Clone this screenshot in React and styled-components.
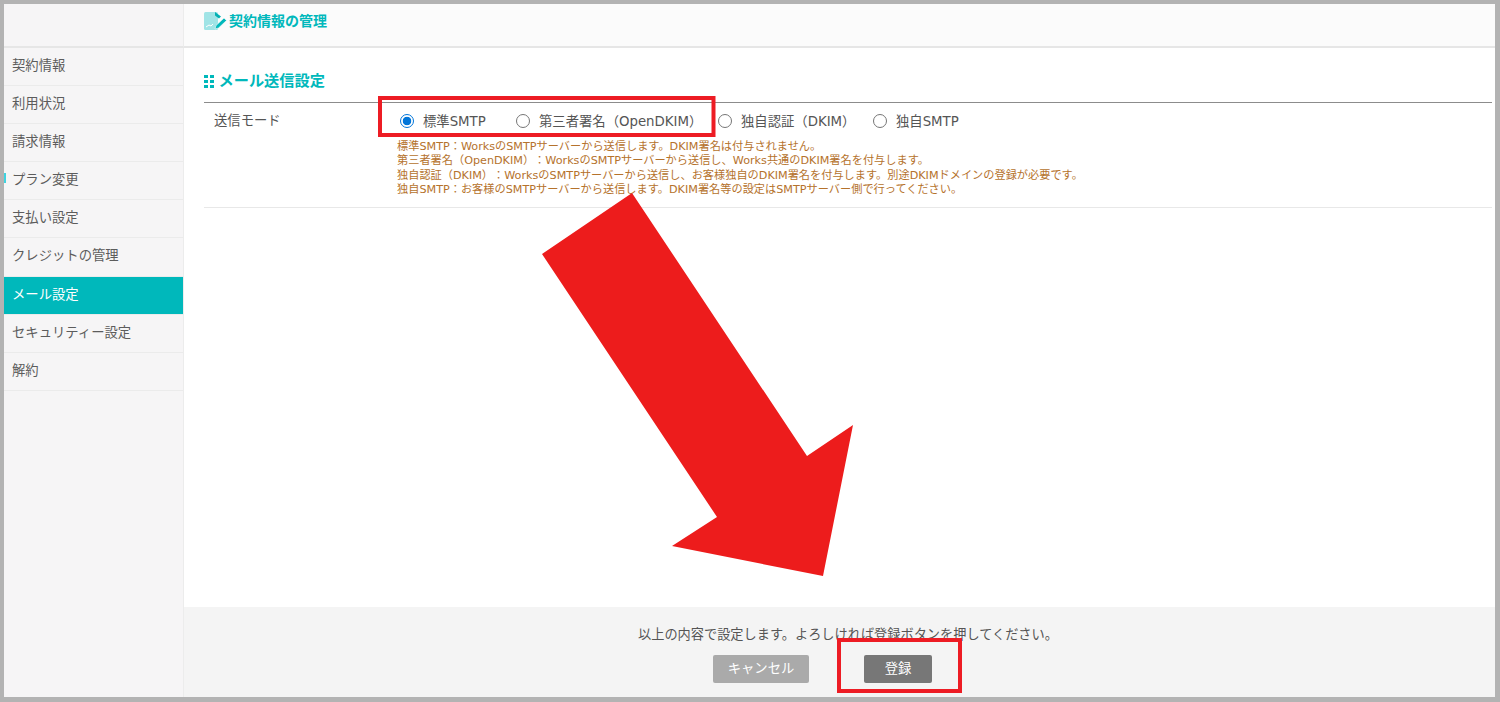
import React from 'react';
import styled, { createGlobalStyle } from 'styled-components';

const GlobalStyle = createGlobalStyle`
    html, body {
        margin: 0;
        padding: 0;
        overflow: hidden;
        background: #fff;
    }
    body {
        font-family: "DejaVu Sans", "Noto Sans CJK JP", sans-serif;
        text-spacing-trim: space-all;
        color: #555;
    }
`;

const Frame = styled.div`
    position: relative;
    box-sizing: border-box;
    width: 1500px;
    height: 702px;
    border: solid #b3b3b3;
    border-width: 4px 5px 5px 4px;
    display: grid;
    grid-template-columns: 180px 1fr;
    grid-template-rows: 44px 1fr;
    background: #fff;
`;

const SideTop = styled.div`
    background: #f6f5f6;
    border-right: 1px solid #ececec;
    border-bottom: 2px solid #e6e6e6;
`;

const Header = styled.div`
    background: #fbfbfb;
    border-bottom: 2px solid #e6e6e6;
    display: flex;
    align-items: flex-start;
    padding: 7px 0 0 20px;
    gap: 1px;
`;

const PageTitle = styled.h1`
    margin: 0;
    font-size: 14px;
    line-height: 20px;
    font-weight: 700;
    color: #00b8bb;
`;

const Side = styled.ul`
    margin: 0;
    padding: 0;
    list-style: none;
    background: #f6f5f6;
    border-right: 1px solid #ececec;
`;

const SideItem = styled.li`
    position: relative;
    box-sizing: border-box;
    height: 38.1px;
    padding-left: 8px;
    font-size: 10pt;
    line-height: 36px;
    color: ${p => (p.$active ? '#fff' : '#5c5c5c')};
    background: ${p => (p.$active ? '#00b8bb' : 'transparent')};
    border-bottom: 1px solid #ebebeb;

    &::before {
        content: ${p => (p.$mark ? '""' : 'none')};
        position: absolute;
        left: 0;
        top: 11px;
        width: 2px;
        height: 10px;
        background: #3fd3e0;
    }
`;

const Main = styled.div`
    display: flex;
    flex-direction: column;
    min-height: 0;
`;

const Content = styled.section`
    flex: 1;
    padding: 22px 3px 0 20px;
`;

const SectionTitle = styled.h2`
    margin: 0;
    display: flex;
    align-items: center;
    gap: 5px;
    height: 23px;
    font-size: 15.2px;
    font-weight: 700;
    color: #00b8bb;
    line-height: 23px;
`;

const Dots = styled.span`
    display: grid;
    grid-template-columns: 4px 4px;
    grid-auto-rows: 3.5px;
    gap: 1.5px;

    i {
        background: #00b8bb;
    }
`;

const FormRow = styled.div`
    margin-top: 9px;
    border-top: 1px solid #8c8c8c;
    border-bottom: 1px solid #e8e8e8;
    display: grid;
    grid-template-columns: 186px 1fr;
    height: 106px;
    box-sizing: border-box;
`;

const RowLabel = styled.div`
    padding: 8px 0 0 10px;
    font-size: 10pt;
    line-height: 20px;
    color: #555;
`;

const RowBody = styled.div`
    padding-top: 8px;
`;

const RadioGroup = styled.div`
    display: flex;
    height: 20px;
    align-items: center;
    padding-left: 10px;
`;

const RadioLabel = styled.label`
    display: flex;
    align-items: center;
    gap: 9px;
    width: ${p => p.$w}px;
    font-size: 10pt;
    line-height: 20px;
    color: #555;
    white-space: nowrap;
`;

const RadioText = styled.span`
    padding-top: 1px;
`;

const Radio = styled.input.attrs({ type: 'radio', readOnly: true })`
    appearance: none;
    box-sizing: border-box;
    flex: none;
    margin: 0;
    width: 14px;
    height: 14px;
    border-radius: 50%;
    border: 1.2px solid #767676;
    background: #fff;

    &:checked {
        border: 1.5px solid #0075d9;
        background: radial-gradient(circle, #0075d9 0 4px, #fff 4.6px);
    }
`;

const Notes = styled.p`
    margin: 9px 0 0;
    padding-left: 7px;
    font-size: 11.2px;
    line-height: 14.3px;
    color: #b5722c;
`;

const Footer = styled.div`
    height: 90px;
    box-sizing: border-box;
    background: #f4f4f4;
    padding-top: 18px;
    text-align: center;
`;

const FooterText = styled.p`
    margin: 0 0 10px;
    padding-left: 17px;
    font-size: 13.2px;
    line-height: 20px;
    color: #555;
`;

const Buttons = styled.div`
    display: flex;
    justify-content: center;
    gap: 55px;
    padding-right: 34px;
`;

const Button = styled.button`
    width: ${p => p.$w}px;
    height: 28px;
    padding: 0 0 4px;
    border: 0;
    border-radius: 2px;
    font: inherit;
    font-size: 10pt;
    color: #fff;
    background: ${p => (p.$primary ? '#777' : '#aaa')};
`;

const Overlay = styled.svg`
    position: absolute;
    left: -4px;
    top: -4px;
    width: 1500px;
    height: 702px;
    pointer-events: none;
`;

const menu = ['契約情報', '利用状況', '請求情報', 'プラン変更', '支払い設定', 'クレジットの管理', 'メール設定', 'セキュリティー設定', '解約'];

const modes = [
    { label: '標準SMTP', w: 116, checked: true },
    { label: '第三者署名（OpenDKIM）', w: 202 },
    { label: '独自認証（DKIM）', w: 155 },
    { label: '独自SMTP', w: 100 },
];

const notes = [
    '標準SMTP：WorksのSMTPサーバーから送信します。DKIM署名は付与されません。',
    '第三者署名（OpenDKIM）：WorksのSMTPサーバーから送信し、Works共通のDKIM署名を付与します。',
    '独自認証（DKIM）：WorksのSMTPサーバーから送信し、お客様独自のDKIM署名を付与します。別途DKIMドメインの登録が必要です。',
    '独自SMTP：お客様のSMTPサーバーから送信します。DKIM署名等の設定はSMTPサーバー側で行ってください。',
];

function TitleIcon() {
    return (
        <svg width="24" height="20" viewBox="0 0 24 20">
            <rect x="0" y="1" width="14" height="18" rx="1.5" fill="#a0e4e6" />
            <path d="M2 16l3-2 2 1 2-2" fill="none" stroke="#fff" strokeWidth="1" />
            <path d="M11 1l6 4.5-2 2-4-3z" fill="#00b0b3" />
            <path d="M11 18l1-3.5 8-7.5 2.5 2.5-8 7.5z" fill="#00b8bb" stroke="#fbfbfb" strokeWidth="0.6" />
        </svg>
    );
}

function App() {
    return (
        <>
            <GlobalStyle />
            <Frame>
                <SideTop />
                <Header>
                    <TitleIcon />
                    <PageTitle>契約情報の管理</PageTitle>
                </Header>
                <Side>
                    {menu.map(m => (
                        <SideItem key={m} $active={m === 'メール設定'} $mark={m === 'プラン変更'}>{m}</SideItem>
                    ))}
                </Side>
                <Main>
                    <Content>
                        <SectionTitle>
                            <Dots><i /><i /><i /><i /><i /><i /></Dots>
                            メール送信設定
                        </SectionTitle>
                        <FormRow>
                            <RowLabel>送信モード</RowLabel>
                            <RowBody>
                                <RadioGroup>
                                    {modes.map(m => (
                                        <RadioLabel key={m.label} $w={m.w}>
                                            <Radio name="mode" defaultChecked={m.checked} />
                                            <RadioText>{m.label}</RadioText>
                                        </RadioLabel>
                                    ))}
                                </RadioGroup>
                                <Notes>
                                    {notes.map(n => (
                                        <React.Fragment key={n}>{n}<br /></React.Fragment>
                                    ))}
                                </Notes>
                            </RowBody>
                        </FormRow>
                    </Content>
                    <Footer>
                        <FooterText>以上の内容で設定します。よろしければ登録ボタンを押してください。</FooterText>
                        <Buttons>
                            <Button $w={96}>キャンセル</Button>
                            <Button $w={68} $primary>登録</Button>
                        </Buttons>
                    </Footer>
                </Main>
                <Overlay viewBox="0 0 1500 702">
                    <rect x="380" y="98" width="333.5" height="37" fill="none" stroke="#ed1c24" strokeWidth="4" />
                    <rect x="839" y="640" width="121" height="51" fill="none" stroke="#ed1c24" strokeWidth="4" />
                    <polygon points="632,193 807,456 853,425 823,576 672,546 717,517 542,254" fill="#ed1c1c" />
                </Overlay>
            </Frame>
        </>
    );
}

export default App;
